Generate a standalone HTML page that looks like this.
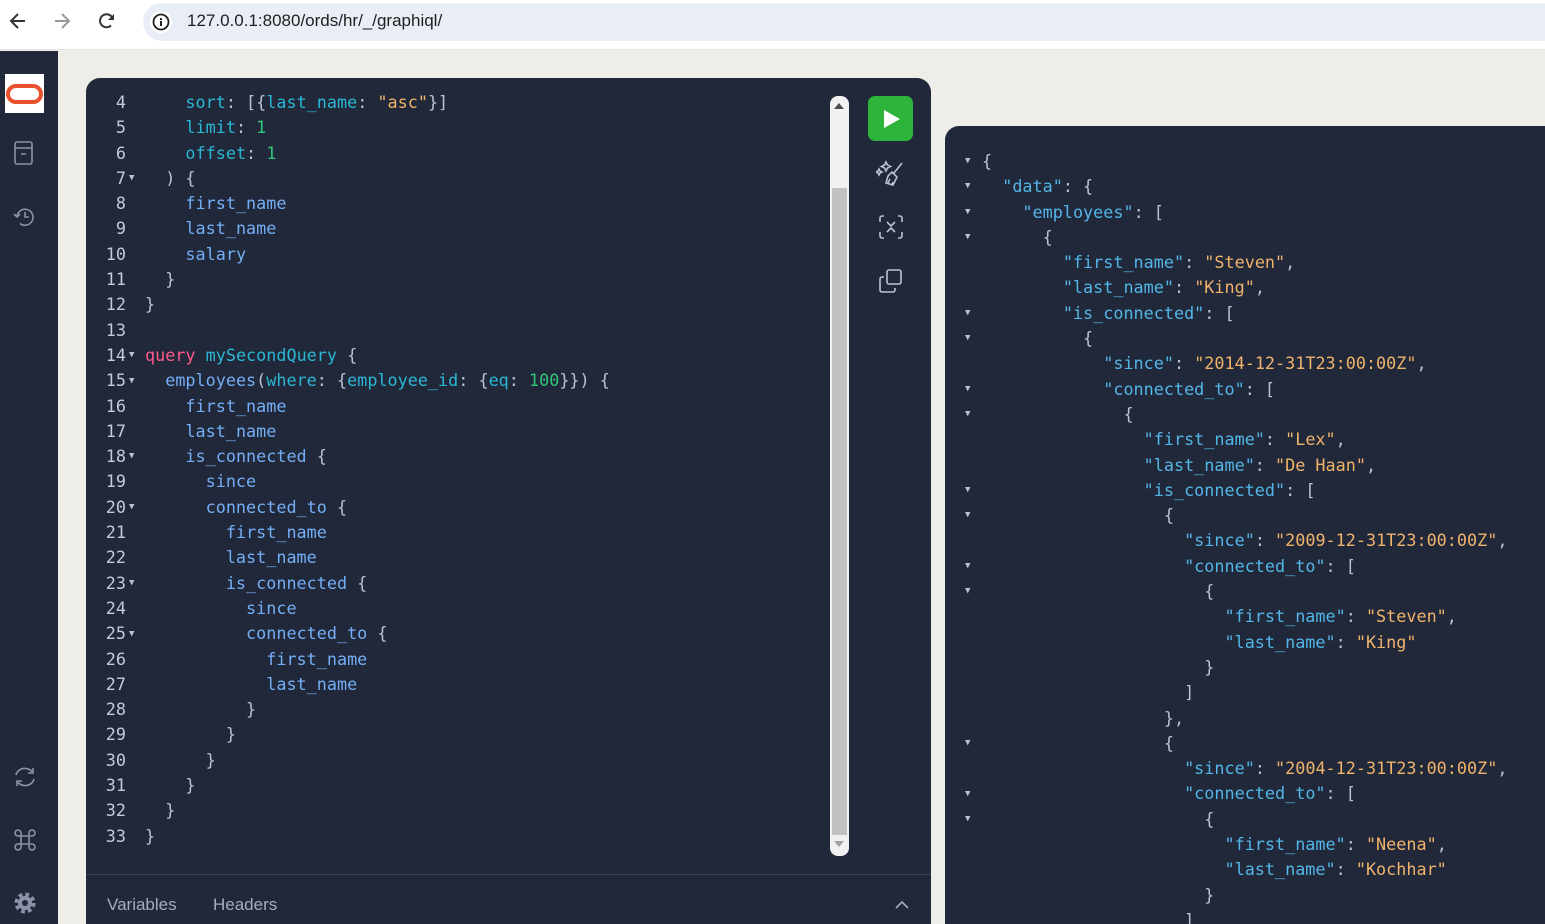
<!DOCTYPE html>
<html style="overflow:hidden;width:1545px;height:924px"><head><meta charset="utf-8">
<style>
*{margin:0;padding:0;box-sizing:border-box}
body{width:1545px;height:924px;overflow:hidden;background:#efede9;font-family:"Liberation Sans",sans-serif;position:relative}
.bar{position:absolute;left:0;top:0;width:1545px;height:50px;background:#fff;border-bottom:1px solid #e3e3e3}
.pill{position:absolute;left:143px;top:3px;width:1420px;height:38px;border-radius:19px;background:#e9eef6}
.url{position:absolute;left:187px;top:11px;font-size:17px;color:#1f1f1f}
.side{position:absolute;left:0;top:51px;width:58px;height:873px;background:#21283a}
.panel{position:absolute;left:86px;top:78px;width:845px;height:846px;background:#21283a;border-radius:14px 14px 0 0}
.res{position:absolute;left:945px;top:126px;width:600px;height:798px;background:#21283a;border-radius:14px 0 0 0}
.code{position:absolute;font-family:"DejaVu Sans Mono","Liberation Mono",monospace;font-size:16.8px;white-space:pre;line-height:25.3px;color:#b9c3d6}
.ln{position:absolute;width:40px;text-align:right;color:#c3cbd9}
.ar{position:absolute;font-size:9px;color:#b9c3d6;line-height:10px}
.p{color:#2bb7d4}.f{color:#74aef5}.s{color:#f0b36b}.n{color:#2fc67a}.k{color:#ff5a8c}.j{color:#52b6e6}
</style></head><body>
<div class="bar">
<svg style="position:absolute;left:8px;top:11px" width="20" height="20" viewBox="0 0 20 20"><path d="M17 10H4M10 3L3 10l7 7" fill="none" stroke="#333" stroke-width="2"/></svg>
<svg style="position:absolute;left:52px;top:11px" width="20" height="20" viewBox="0 0 20 20"><path d="M3 10h13M10 3l7 7-7 7" fill="none" stroke="#999" stroke-width="2"/></svg>
<svg style="position:absolute;left:97px;top:11px" width="20" height="20" viewBox="0 0 20 20"><path d="M16 9A6.5 6.5 0 1 0 14 14.5" fill="none" stroke="#333" stroke-width="2"/><path d="M17 3v6h-6z" fill="#333"/></svg>
<div class="pill"></div>
<svg style="position:absolute;left:150px;top:11px" width="22" height="22" viewBox="0 0 22 22"><circle cx="11" cy="11" r="11" fill="#fff"/><circle cx="11" cy="11" r="7.5" fill="none" stroke="#222" stroke-width="1.8"/><rect x="10" y="10" width="2" height="5" fill="#222"/><rect x="10" y="7" width="2" height="2" fill="#222"/></svg>
<div class="url">127.0.0.1:8080/ords/hr/_/graphiql/</div>
</div>
<div class="side">
<div style="position:absolute;left:5px;top:23px;width:39px;height:39px;background:#fff"></div>
<div style="position:absolute;left:6px;top:33px;width:37px;height:20px;border:4px solid #e9522c;border-radius:10px"></div>
<svg style="position:absolute;left:13px;top:89px" width="22" height="26" viewBox="0 0 22 26" fill="none" stroke="#8a93a6" stroke-width="1.6"><rect x="2" y="2" width="17" height="22" rx="2"/><path d="M2 8h17M8 14h5"/></svg>
<svg style="position:absolute;left:12px;top:154px" width="26" height="24" viewBox="0 0 26 24" fill="none" stroke="#8a93a6" stroke-width="1.6"><path d="M5 12a8 8 0 1 1 3 6.5"/><path d="M2 9l3 3 3-3M13 7v5h4"/></svg>
<svg style="position:absolute;left:12px;top:714px" width="26" height="24" viewBox="0 0 26 24" fill="none" stroke="#8a93a6" stroke-width="1.6"><path d="M4 10a9 8 0 0 1 17-2M22 14a9 8 0 0 1-17 2"/><path d="M21 3v5h-5M5 21v-5h5"/></svg>
<svg style="position:absolute;left:12px;top:776px" width="26" height="26" viewBox="0 0 26 26" fill="none" stroke="#8a93a6" stroke-width="1.6"><path d="M9 9h8v8H9zM9 9H6a3 3 0 1 1 3-3v14a3 3 0 1 1-3-3h14a3 3 0 1 1-3 3V6a3 3 0 1 1 3 3z"/></svg>
<svg style="position:absolute;left:12px;top:839px" width="26" height="26" viewBox="0 0 26 26"><circle cx="13" cy="13" r="8" fill="none" stroke="#8a93a6" stroke-width="5" stroke-dasharray="3.5 2.8"/><circle cx="13" cy="13" r="7" fill="#8a93a6"/><circle cx="13" cy="13" r="3" fill="#21283a"/></svg>
</div>
<div class="panel"></div>
<div style="position:absolute;left:86px;top:874px;width:845px;height:1px;background:#3a4154"></div>
<div style="position:absolute;left:107px;top:895px;font-size:17px;color:#a4adbd">Variables</div>
<div style="position:absolute;left:213px;top:895px;font-size:17px;color:#a4adbd">Headers</div>
<svg style="position:absolute;left:894px;top:899px" width="16" height="12" viewBox="0 0 16 12"><path d="M2 9l6-6 6 6" fill="none" stroke="#a4adbd" stroke-width="1.6"/></svg>
<div style="position:absolute;left:830px;top:96px;width:19px;height:760px;background:#f1f1f1;border-radius:8px"></div>
<div style="position:absolute;left:832px;top:188px;width:15px;height:647px;background:#c1c1c1"></div>
<div style="position:absolute;left:834px;top:103px;border:5px solid transparent;border-bottom:6px solid #505050;border-top:0"></div>
<div style="position:absolute;left:834px;top:841px;border:5px solid transparent;border-top:6px solid #a3a3a3;border-bottom:0"></div>
<div style="position:absolute;left:868px;top:96px;width:45px;height:45px;background:#2fb43b;border-radius:7px"></div>
<div style="position:absolute;left:884px;top:110px;border-left:16px solid #fff;border-top:9px solid transparent;border-bottom:9px solid transparent"></div>
<svg style="position:absolute;left:876px;top:159px" width="30" height="30" viewBox="0 0 30 30" fill="none" stroke="#b9c3d6" stroke-width="1.6"><path d="M10 3l1.5 3 3 1.5-3 1.5L10 12 8.5 9l-3-1.5 3-1.5zM3 10l1 2 2 1-2 1-1 2-1-2-2-1 2-1zM26 4l-8 10M12 17l4-4 5 5-4 8-7-2zM12 24l2-4M16 26l1-3"/></svg>
<svg style="position:absolute;left:877px;top:213px" width="28" height="28" viewBox="0 0 28 28" fill="none" stroke="#b9c3d6" stroke-width="1.6"><path d="M7 3H5a2 2 0 0 0-2 2v4M21 3h2a2 2 0 0 1 2 2v4M7 25H5a2 2 0 0 1-2-2v-4M21 25h2a2 2 0 0 0 2-2v-4M10 9l4 4 4-4M10 19l4-4 4 4"/></svg>
<svg style="position:absolute;left:877px;top:267px" width="28" height="28" viewBox="0 0 28 28" fill="none" stroke="#b9c3d6" stroke-width="1.6"><rect x="10" y="3" width="14" height="14" rx="2"/><path d="M7 10H5a2 2 0 0 0-2 2v11a2 2 0 0 0 2 2h11a2 2 0 0 0 2-2v-2"/></svg>

<div class="code" style="left:86px;top:90px;width:740px;height:780px">
<div class="ln" style="left:0;top:0">4<br>5<br>6<br>7<br>8<br>9<br>10<br>11<br>12<br>13<br>14<br>15<br>16<br>17<br>18<br>19<br>20<br>21<br>22<br>23<br>24<br>25<br>26<br>27<br>28<br>29<br>30<br>31<br>32<br>33</div>
<div class="ar" style="left:43px;top:83px">▼</div>
<div class="ar" style="left:43px;top:260px">▼</div>
<div class="ar" style="left:43px;top:286px">▼</div>
<div class="ar" style="left:43px;top:361px">▼</div>
<div class="ar" style="left:43px;top:412px">▼</div>
<div class="ar" style="left:43px;top:488px">▼</div>
<div class="ar" style="left:43px;top:539px">▼</div>
<div style="position:absolute;left:59px;top:0">    <span class="p">sort</span>: [{<span class="p">last_name</span>: <span class="s">"asc"</span>}]
    <span class="p">limit</span>: <span class="n">1</span>
    <span class="p">offset</span>: <span class="n">1</span>
  ) {
    <span class="f">first_name</span>
    <span class="f">last_name</span>
    <span class="f">salary</span>
  }
}

<span class="k">query</span> <span class="p">mySecondQuery</span> {
  <span class="f">employees</span>(<span class="p">where</span>: {<span class="p">employee_id</span>: {<span class="p">eq</span>: <span class="n">100</span>}}) {
    <span class="f">first_name</span>
    <span class="f">last_name</span>
    <span class="f">is_connected</span> {
      <span class="f">since</span>
      <span class="f">connected_to</span> {
        <span class="f">first_name</span>
        <span class="f">last_name</span>
        <span class="f">is_connected</span> {
          <span class="f">since</span>
          <span class="f">connected_to</span> {
            <span class="f">first_name</span>
            <span class="f">last_name</span>
          }
        }
      }
    }
  }
}</div>
</div>

<div class="res"></div>
<div class="code" style="left:945px;top:149px;width:600px;height:775px;overflow:hidden">
<div class="ar" style="left:20px;top:7px">▼</div>
<div class="ar" style="left:20px;top:32px">▼</div>
<div class="ar" style="left:20px;top:58px">▼</div>
<div class="ar" style="left:20px;top:83px">▼</div>
<div class="ar" style="left:20px;top:159px">▼</div>
<div class="ar" style="left:20px;top:184px">▼</div>
<div class="ar" style="left:20px;top:235px">▼</div>
<div class="ar" style="left:20px;top:260px">▼</div>
<div class="ar" style="left:20px;top:336px">▼</div>
<div class="ar" style="left:20px;top:361px">▼</div>
<div class="ar" style="left:20px;top:412px">▼</div>
<div class="ar" style="left:20px;top:437px">▼</div>
<div class="ar" style="left:20px;top:589px">▼</div>
<div class="ar" style="left:20px;top:640px">▼</div>
<div class="ar" style="left:20px;top:665px">▼</div>
<div style="position:absolute;left:37px;top:0">{
  <span class="j">"data"</span>: {
    <span class="j">"employees"</span>: [
      {
        <span class="j">"first_name"</span>: <span class="s">"Steven"</span>,
        <span class="j">"last_name"</span>: <span class="s">"King"</span>,
        <span class="j">"is_connected"</span>: [
          {
            <span class="j">"since"</span>: <span class="s">"2014-12-31T23:00:00Z"</span>,
            <span class="j">"connected_to"</span>: [
              {
                <span class="j">"first_name"</span>: <span class="s">"Lex"</span>,
                <span class="j">"last_name"</span>: <span class="s">"De Haan"</span>,
                <span class="j">"is_connected"</span>: [
                  {
                    <span class="j">"since"</span>: <span class="s">"2009-12-31T23:00:00Z"</span>,
                    <span class="j">"connected_to"</span>: [
                      {
                        <span class="j">"first_name"</span>: <span class="s">"Steven"</span>,
                        <span class="j">"last_name"</span>: <span class="s">"King"</span>
                      }
                    ]
                  },
                  {
                    <span class="j">"since"</span>: <span class="s">"2004-12-31T23:00:00Z"</span>,
                    <span class="j">"connected_to"</span>: [
                      {
                        <span class="j">"first_name"</span>: <span class="s">"Neena"</span>,
                        <span class="j">"last_name"</span>: <span class="s">"Kochhar"</span>
                      }
                    ]</div>
</div>
</body></html>
